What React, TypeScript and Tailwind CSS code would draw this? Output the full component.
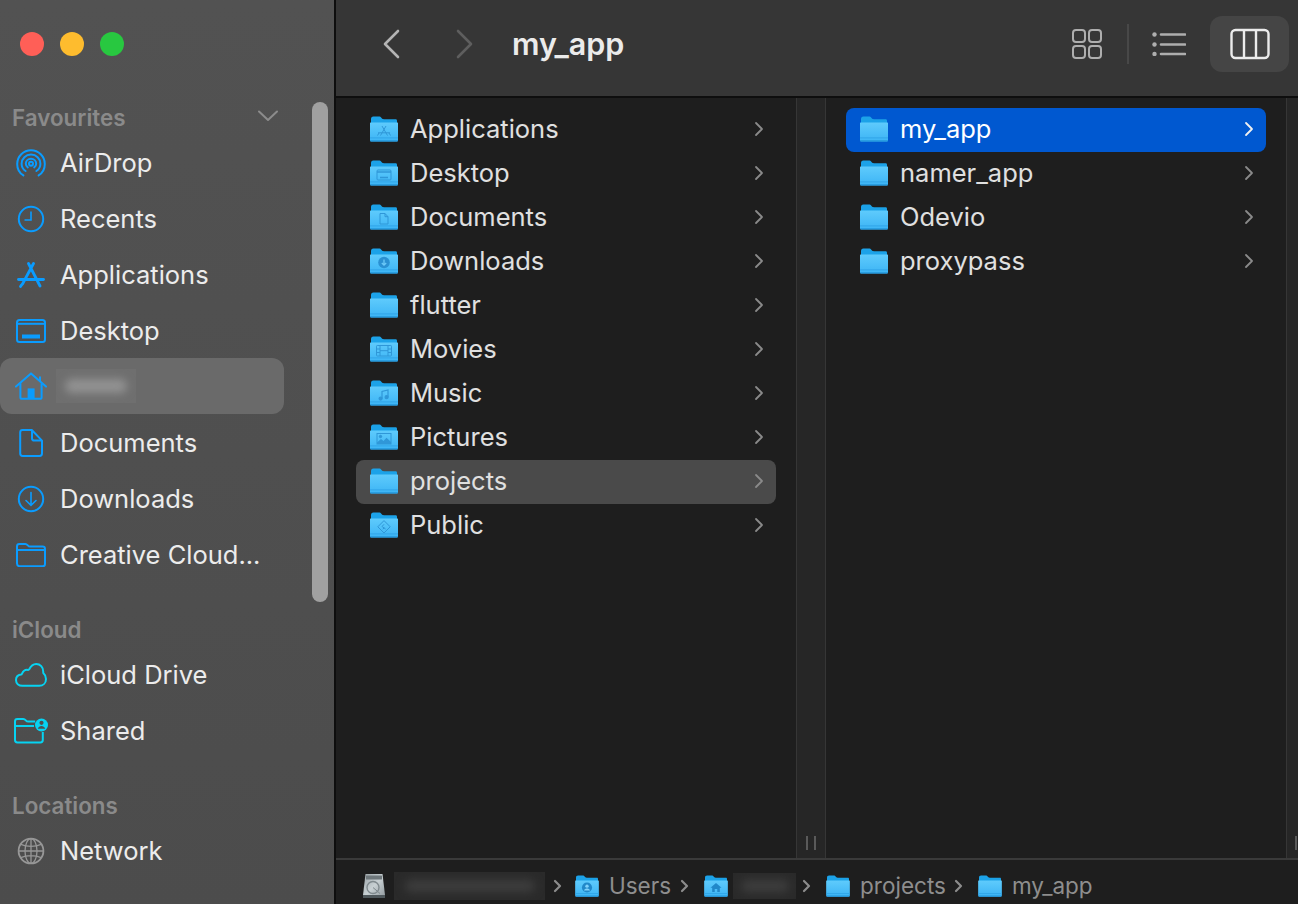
import type { ReactNode } from "react"

// shared gradient defs for the folder icons
function FolderDefs() {
  return (
    <svg className="absolute w-0 h-0" aria-hidden="true">
      <defs>
        <linearGradient id="folderBody" x1="0" y1="0" x2="0" y2="1">
          <stop offset="0" stopColor="#5fcbfc" />
          <stop offset="1" stopColor="#3cb4f5" />
        </linearGradient>
        <linearGradient id="diskBody" x1="0" y1="0" x2="1" y2="1">
          <stop offset="0" stopColor="#9aa3a7" />
          <stop offset=".5" stopColor="#c8d0d3" />
          <stop offset="1" stopColor="#8e979b" />
        </linearGradient>
      </defs>
    </svg>
  )
}

function Folder({ size = 28, glyph }: { size?: number; glyph?: ReactNode }) {
  const h = Math.round((size * 26) / 28)
  return (
    <svg width={size} height={h} viewBox="0 0 28 26" className="shrink-0">
      <path d="M1 3.2C1 1.400 1.800.6 3.400.6h5.400c1.300 0 1.900.5 2.700 1.400.7.8 1.300 1.200 2.400 1.200h11.700c1 0 1.400.6 1.400 1.600V10H1z" fill="#1ca2e8" />
      <path d="M.6 6.400h26.800c.4 0 .6.2.6.6v17c0 1-.6 1.600-1.600 1.600H1.600C.6 25.600 0 25 0 24V7c0-.4.2-.6.6-.6z" fill="url(#folderBody)" />
      <rect x="0" y="21.400" width="28" height="1" fill="#30a5e8" />
      <path d="M0 24.200h28c0 .9-.6 1.400-1.600 1.400H1.600C.6 25.600 0 25.100 0 24.200z" fill="#2396da" />
      {glyph}
    </svg>
  )
}

const glyphStroke = { fill: "none", stroke: "#2f97d8", strokeWidth: 1 }

const folderGlyphs: Record<string, ReactNode> = {
  Applications: (
    <g {...glyphStroke}>
      <path d="M12 10l5.500 9.500M16 10L10.500 19.500M8 16.800h12M7.500 19.500l1.500-2.500M20.500 19.500L19 17" />
    </g>
  ),
  Desktop: (
    <g {...glyphStroke}>
      <rect x="7" y="10" width="14" height="10" rx="1" />
      <path d="M7 12h14M10 17.500h8" strokeWidth="1.400" />
    </g>
  ),
  Documents: (
    <g {...glyphStroke}>
      <path d="M10 9.500h5l3 3.200V20h-8zM15 9.500v3.200h3" />
    </g>
  ),
  Downloads: (
    <g>
      <circle cx="14" cy="14.500" r="5.800" fill="#2a90d2" />
      <path d="M14 11.500v5.500M11.800 15l2.200 2.200 2.200-2.200" fill="none" stroke="#6cc9f8" strokeWidth="1.300" />
    </g>
  ),
  Movies: (
    <g {...glyphStroke}>
      <rect x="6.500" y="9.500" width="15" height="10.500" rx=".8" />
      <path d="M10 9.500V20M18 9.500V20M10 14.700h8M6.500 13h3.500M6.500 16.500h3.500M18 13h3.500M18 16.500h3.500" />
    </g>
  ),
  Music: (
    <g {...glyphStroke} strokeWidth="1.200">
      <path d="M12 18.500v-7l6-1.500v7" />
      <circle cx="10.600" cy="18.600" r="1.500" fill="#2f97d8" />
      <circle cx="16.600" cy="17.200" r="1.500" fill="#2f97d8" />
    </g>
  ),
  Pictures: (
    <g {...glyphStroke}>
      <rect x="7" y="9.500" width="14" height="10.500" />
      <circle cx="10.500" cy="12.500" r="1.200" fill="#2f97d8" />
      <path d="M7 18.500l4-3.500 2.500 2 3-3.200 4.500 4.200v2H7z" fill="#2f97d8" stroke="none" />
    </g>
  ),
  Public: (
    <g {...glyphStroke}>
      <path d="M14 8.600l6.200 6.200-6.200 6.200-6.200-6.200z" />
      <path d="M12 14.500l2-2.200M12.200 14.600l3.400 2.400M14.200 15.800l-1.400 1.400" />
    </g>
  ),
  Users: (
    <g>
      <circle cx="14" cy="14.800" r="6" fill="#2188c9" />
      <circle cx="14" cy="13.200" r="2" fill="#7fd2fb" />
      <path d="M10.400 18.400c.8-1.800 2-2.400 3.600-2.400s2.800.6 3.600 2.400z" fill="#7fd2fb" />
    </g>
  ),
  Home: (
    <path d="M14 9.500l6.500 5.500h-2v5h-3v-3.400h-3V20h-3v-5h-2z" fill="#2188c9" />
  ),
}

const blue = "#0a9cff"
const cyan = "#06d3f2"

const sideIcons: Record<string, ReactNode> = {
  airdrop: (
    <svg width="30" height="28" viewBox="0 0 30 28" fill="none" stroke={blue} strokeWidth="2" strokeLinecap="round">
      <path d="M7.400 26.400C3.400 24 1.200 19.800 1.200 15 1.200 7.400 7.400 1.200 15 1.200S28.800 7.400 28.800 15c0 4.800-2.200 9-6.200 11.400" />
      <path d="M9.600 22C7 20.400 5.600 17.800 5.600 14.800 5.600 9.600 9.800 5.600 15 5.600s9.400 4 9.400 9.200c0 3-1.400 5.600-4 7.200" />
      <path d="M11.800 18.400C10.400 17.400 9.800 16.100 9.800 14.800c0-2.900 2.300-5 5.200-5s5.200 2.100 5.200 5c0 1.300-.6 2.600-2 3.600" />
      <circle cx="15" cy="14.800" r="2" strokeWidth="2" />
    </svg>
  ),
  clock: (
    <svg width="28" height="28" viewBox="0 0 28 28" fill="none" stroke={blue} strokeWidth="2">
      <circle cx="14" cy="14" r="12.200" />
      <path d="M14 6.500V15H7.500" strokeWidth="1.600" />
    </svg>
  ),
  apps: (
    <svg width="28" height="26" viewBox="0 0 28 26" fill="none" stroke={blue} strokeWidth="2.800" strokeLinecap="round">
      <path d="M11.500 1.500L23 24M16.500 1.500L5.500 22" />
      <path d="M1.500 17.500h25" />
      <path d="M3.500 24.500l1-1.600" />
    </svg>
  ),
  desktop: (
    <svg width="30" height="24" viewBox="0 0 30 24" fill="none" stroke={blue} strokeWidth="2">
      <rect x="1" y="1" width="28" height="22" rx="2.500" />
      <path d="M1 4.800h28" />
      <rect x="6" y="15.500" width="18" height="4" fill={blue} stroke="none" />
    </svg>
  ),
  home: (
    <svg width="32" height="28" viewBox="0 0 32 28" fill="none" stroke={blue} strokeWidth="2" strokeLinejoin="round">
      <path d="M1 14.600L16 1.400l15 13.200" strokeLinecap="round" />
      <path d="M5.400 11.200v14c0 1 .6 1.600 1.600 1.600h18c1 0 1.600-.6 1.600-1.600v-14" />
      <path d="M25 4.400v5" />
      <rect x="12.600" y="16.400" width="7" height="10.400" fill={blue} stroke="none" />
    </svg>
  ),
  doc: (
    <svg width="24" height="28" viewBox="0 0 24 28" fill="none" stroke={blue} strokeWidth="2" strokeLinejoin="round">
      <path d="M3.600 1h9.200L23 11.600v13c0 1.500-.8 2.400-2.400 2.400H3.600C2 27 1.200 26.100 1.200 24.600V3.400C1.200 1.900 2 1 3.600 1z" />
      <path d="M13 1v8.200c0 1.600.8 2.400 2.400 2.400H23" />
    </svg>
  ),
  download: (
    <svg width="28" height="28" viewBox="0 0 28 28" fill="none" stroke={blue} strokeWidth="2" strokeLinecap="round">
      <circle cx="14" cy="14" r="12.200" />
      <path d="M14 7.500V20M9 15.500l5 4.800 5-4.800" strokeWidth="1.600" />
    </svg>
  ),
  folder: (
    <svg width="30" height="24" viewBox="0 0 30 24" fill="none" stroke={blue} strokeWidth="2" strokeLinejoin="round">
      <path d="M1 7V3.400C1 1.900 1.800 1 3.400 1h5.800c1.200 0 1.800.4 2.600 1.300.7.800 1.300 1.200 2.400 1.200h12.400c1.500 0 2.400.8 2.400 2.400v15c0 1.500-.9 2.400-2.400 2.400H3.400C1.900 23 1 22.100 1 20.600V7h28" />
    </svg>
  ),
  cloud: (
    <svg width="32" height="24" viewBox="0 0 32 24" fill="none" stroke={cyan} strokeWidth="2" strokeLinejoin="round">
      <path d="M7.400 22.800C3.600 22.800 1 20.400 1 17.100c0-2.900 2-5.100 4.900-5.500.6-.1.800-.3 1-.8C8.400 7.600 10.500 6.400 13 6.900c.5.100.8 0 1.100-.4C15.800 3 18.200 1 21.200 1c4.100 0 7 3.200 7 7.500 0 .6 0 1 .1 1.400 1.700 1.500 2.700 3.700 2.700 6 0 4.100-2.900 6.900-6.800 6.900z" />
    </svg>
  ),
  shared: (
    <svg width="34" height="26" viewBox="0 0 34 26" fill="none" stroke={cyan} strokeWidth="2" strokeLinejoin="round">
      <path d="M1 8V3.400C1 1.900 1.800 1 3.400 1h5.800c1.200 0 1.800.4 2.600 1.300.7.800 1.300 1.200 2.400 1.200h7M1 8h19M28.800 14v8c0 1.600-.9 2.400-2.400 2.400H3.400C1.900 24.400 1 23.600 1 22V8" />
      <circle cx="27.500" cy="7" r="6.500" fill={cyan} stroke="none" />
      <circle cx="27.500" cy="4.800" r="2.100" fill="#4f4f4f" stroke="none" />
      <path d="M23.800 10.700c.7-1.900 2-2.700 3.700-2.700s3 .8 3.700 2.700z" fill="#4f4f4f" stroke="none" />
    </svg>
  ),
  globe: (
    <svg width="28" height="28" viewBox="0 0 28 28" fill="none" stroke="#979797" strokeWidth="1.300">
      <circle cx="14" cy="14" r="12.400" strokeWidth="1.800" />
      <ellipse cx="14" cy="14" rx="6" ry="12.400" />
      <path d="M14 1.600v24.800M1.600 14h24.800M3.800 7.400c6 2.600 14.400 2.600 20.400 0M3.800 20.600c6-2.600 14.400-2.600 20.400 0" />
    </svg>
  ),
}

function SideRow({ icon, label, active }: { icon: string; label?: string; active?: boolean }) {
  return (
    <div className={active ? "flex items-center h-14 -translate-y-px rounded-xl bg-[#6a6a6a] w-[284px]" : "flex items-center h-14 w-[284px]"}>
      <div className="w-[60px] flex items-center justify-center shrink-0 pl-0.5">{sideIcons[icon]}</div>
      {label ? (
        <span className="text-[25.5px] leading-none text-[#ececec]">{label}</span>
      ) : (
        <div className="w-[80px] h-[34px] -ml-1 bg-[#6f6f6f] flex items-center justify-center overflow-hidden">
          <div className="w-[62px] h-[14px] rounded-full bg-[#929292] blur-[4px]" />
        </div>
      )}
    </div>
  )
}

function SideHeader({ label, chevron }: { label: string; chevron?: boolean }) {
  return (
    <div className="flex items-center justify-between h-7 pl-3 pr-[56px]">
      <span className="text-[22.4px] leading-none font-semibold text-[#8a8a8a]">{label}</span>
      {chevron && (
        <svg width="20" height="12" viewBox="0 0 20 12" fill="none" stroke="#8c8c8c" strokeWidth="2" strokeLinecap="round" strokeLinejoin="round" className="-translate-y-0.5">
          <path d="M1 1.500l9 8.500 9-8.500" />
        </svg>
      )}
    </div>
  )
}

function Sidebar() {
  return (
    <aside className="relative w-[336px] shrink-0 h-full border-r-2 border-[#0e0e0e] bg-gradient-to-b from-[#525252] to-[#4c4c4c]">
      <div className="flex items-center gap-4 h-[88px] pl-5">
        <div className="w-6 h-6 rounded-full bg-[#ff5f57]" />
        <div className="w-6 h-6 rounded-full bg-[#febc2e]" />
        <div className="w-6 h-6 rounded-full bg-[#28c840]" />
      </div>
      <div className="pt-4">
        <SideHeader label="Favourites" chevron />
        <div className="pt-[3px]">
          <SideRow icon="airdrop" label="AirDrop" />
          <SideRow icon="clock" label="Recents" />
          <SideRow icon="apps" label="Applications" />
          <SideRow icon="desktop" label="Desktop" />
          <SideRow icon="home" active />
          <SideRow icon="doc" label="Documents" />
          <SideRow icon="download" label="Downloads" />
          <SideRow icon="folder" label="Creative Cloud..." />
        </div>
      </div>
      <div className="pt-[33px]">
        <SideHeader label="iCloud" />
        <div className="pt-[3px]">
          <SideRow icon="cloud" label="iCloud Drive" />
          <SideRow icon="shared" label="Shared" />
        </div>
      </div>
      <div className="pt-[33px]">
        <SideHeader label="Locations" />
        <div className="pt-[3px]">
          <SideRow icon="globe" label="Network" />
        </div>
      </div>
      {/* overlay scrollbar */}
      <div className="absolute left-[312px] top-[102px] w-4 h-[500px] rounded-full bg-[#a0a0a0]" />
    </aside>
  )
}

function Toolbar() {
  return (
    <header className="flex items-center h-[98px] shrink-0 bg-[#363636] border-b-2 border-[#0e0e0e] pb-2 pl-[46px] pr-[9px]">
      <svg width="20" height="30" viewBox="0 0 20 30" fill="none" stroke="#b4b4b4" strokeWidth="2.600" strokeLinecap="round" strokeLinejoin="round">
        <path d="M16 2L3 15l13 13" />
      </svg>
      <svg width="20" height="30" viewBox="0 0 20 30" fill="none" stroke="#5e5e5e" strokeWidth="2.600" strokeLinecap="round" strokeLinejoin="round" className="ml-[52px]">
        <path d="M4 2l13 13L4 28" />
      </svg>
      <span className="ml-[38px] text-[30.5px] leading-none font-semibold text-[#ebebeb]">my_app</span>
      <div className="ml-auto flex items-center">
        <svg width="32" height="32" viewBox="0 0 32 32" fill="none" stroke="#aeaeae" strokeWidth="2">
          <rect x="2" y="2" width="12" height="12" rx="3" />
          <rect x="18" y="2" width="12" height="12" rx="3" />
          <rect x="2" y="18" width="12" height="12" rx="3" />
          <rect x="18" y="18" width="12" height="12" rx="3" />
        </svg>
        <div className="w-0.5 h-10 bg-[#484848] ml-[24px]" />
        <svg width="34" height="24" viewBox="0 0 34 24" fill="none" stroke="#aeaeae" strokeWidth="2.600" strokeLinecap="round" className="ml-[23px]">
          <path d="M9 2.500h24M9 12.500h24M9 22h24" />
          <circle cx="2.500" cy="2.500" r="2.200" fill="#aeaeae" stroke="none" />
          <circle cx="2.500" cy="12.500" r="2.200" fill="#aeaeae" stroke="none" />
          <circle cx="2.500" cy="22" r="2.200" fill="#aeaeae" stroke="none" />
        </svg>
        <div className="ml-[24px] w-[79px] h-14 rounded-xl bg-[#454545] flex items-center justify-center">
          <svg width="40" height="32" viewBox="0 0 40 32" fill="none" stroke="#ececec" strokeWidth="2.400">
            <rect x="1.500" y="2" width="37" height="28" rx="4" />
            <path d="M14 2v28M26 2v28" />
          </svg>
        </div>
      </div>
    </header>
  )
}

function ListRow({ name, selected, focused }: { name: string; selected?: boolean; focused?: boolean }) {
  const bg = selected ? "bg-[#0058d0]" : focused ? "bg-[#4a4a4a]" : ""
  return (
    <div className={`flex items-center h-11 rounded-lg pl-3.5 pr-3 [&>*]:-translate-y-px ${bg}`}>
      <Folder glyph={folderGlyphs[name]} />
      <span className={`ml-3 text-[25.5px] leading-none ${selected ? "text-white" : "text-[#e0e0e0]"}`}>{name}</span>
      <svg width="10" height="16" viewBox="0 0 10 16" fill="none" stroke={selected ? "#f0f0f0" : "#8a8a8a"} strokeWidth="1.800" strokeLinecap="round" strokeLinejoin="round" className="ml-auto">
        <path d="M2 2l6 6-6 6" />
      </svg>
    </div>
  )
}

function ColumnHandle() {
  return (
    <div className="w-[30px] shrink-0 bg-[#262626] border-x border-[#363636] flex items-end justify-center gap-1.5 pb-2">
      <div className="w-0.5 h-[14px] bg-[#5a5a5a]" />
      <div className="w-0.5 h-[14px] bg-[#5a5a5a]" />
    </div>
  )
}

function Columns() {
  const first = ["Applications", "Desktop", "Documents", "Downloads", "flutter", "Movies", "Music", "Pictures", "projects", "Public"]
  const second = ["my_app", "namer_app", "Odevio", "proxypass"]
  return (
    <div className="flex flex-1 min-h-0 bg-[#1e1e1e]">
      <div className="w-[460px] shrink-0 px-5 pt-2.5">
        {first.map((n) => (
          <ListRow key={n} name={n} focused={n === "projects"} />
        ))}
      </div>
      <ColumnHandle />
      <div className="w-[460px] shrink-0 px-5 pt-2.5">
        {second.map((n) => (
          <ListRow key={n} name={n} selected={n === "my_app"} />
        ))}
      </div>
      <div className="flex-1 bg-[#262626] border-l border-[#363636] flex items-end pb-2 pl-[8px]">
        <div className="w-0.5 h-[14px] bg-[#5a5a5a]" />
      </div>
    </div>
  )
}

function PathChevron() {
  return (
    <svg width="10" height="14" viewBox="0 0 10 14" fill="none" stroke="#8c8c8c" strokeWidth="2.200" strokeLinecap="round" strokeLinejoin="round" className="shrink-0">
      <path d="M2 2l5 5-5 5" />
    </svg>
  )
}

function PathBar() {
  return (
    <footer className="flex items-center h-[46px] shrink-0 bg-[#1e1e1e] border-t-2 border-[#3a3a3a] pt-2 pl-[26px] text-[22.5px] leading-none text-[#8e8e8e]">
      <svg width="24" height="26" viewBox="0 0 24 26" className="shrink-0">
        <path d="M3.500 1h17L23 22v1.500c0 1-.6 1.500-1.500 1.500h-19C1.600 25 1 24.500 1 23.500V22z" fill="url(#diskBody)" />
        <rect x="4" y="2.500" width="16" height="4" rx=".5" fill="#6e777b" />
        <circle cx="11" cy="14.500" r="6" fill="none" stroke="#808a8e" strokeWidth="1.400" />
        <path d="M11 14.500l7 6" stroke="#808a8e" strokeWidth="1" />
        <rect x="1" y="22" width="22" height="3" fill="#4f585c" />
      </svg>
      <div className="ml-2 w-[151px] h-7 bg-[#2a2a2a] flex items-center justify-center overflow-hidden shrink-0">
        <div className="w-[130px] h-3 rounded-full bg-[#3e3e3e] blur-[5px]" />
      </div>
      <div className="ml-2"><PathChevron /></div>
      <div className="ml-3"><Folder size={24} glyph={folderGlyphs.Users} /></div>
      <span className="ml-2.5">Users</span>
      <div className="ml-[9px]"><PathChevron /></div>
      <div className="ml-[14px]"><Folder size={24} glyph={folderGlyphs.Home} /></div>
      <div className="ml-[5px] w-[63px] h-[26px] bg-[#2a2a2a] flex items-center justify-center overflow-hidden shrink-0">
        <div className="w-[48px] h-3 rounded-full bg-[#3e3e3e] blur-[5px]" />
      </div>
      <div className="ml-[6px]"><PathChevron /></div>
      <div className="ml-[14px]"><Folder size={24} /></div>
      <span className="ml-2.5">projects</span>
      <div className="ml-[8px]"><PathChevron /></div>
      <div className="ml-[14px]"><Folder size={24} /></div>
      <span className="ml-2.5">my_app</span>
    </footer>
  )
}

export default function App() {
  return (
    <div className="flex w-[1298px] h-[904px] overflow-hidden font-['Inter',sans-serif]">
      <FolderDefs />
      <Sidebar />
      <main className="flex flex-col flex-1 min-w-0">
        <Toolbar />
        <Columns />
        <PathBar />
      </main>
    </div>
  )
}
